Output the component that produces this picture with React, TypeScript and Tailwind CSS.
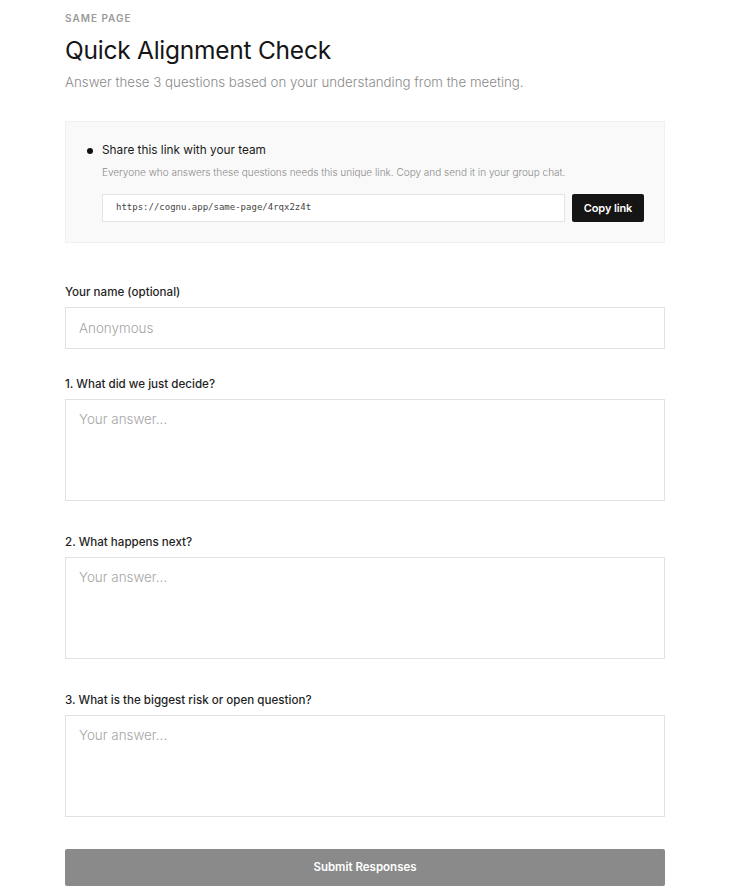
import React from 'react';

const questions = [
  '1. What did we just decide?',
  '2. What happens next?',
  '3. What is the biggest risk or open question?',
];

export default function App() {
  return (
    <div className="min-h-screen bg-white font-['Inter',sans-serif] text-[#1a1a1a]">
      <div className="w-[600px] ml-[65px] pt-[11px] pb-[4px]">
        <div className="text-[10px] leading-[15px] font-semibold tracking-[0.1em] uppercase text-[#9a9a9a]">
          Same Page
        </div>
        <h1 className="mt-[9px] text-[24.5px] leading-[30px] font-normal tracking-[-0.01em] text-[#151515]">
          Quick Alignment Check
        </h1>
        <p className="mt-[7px] text-[13.3px] leading-[20px] font-light text-[#8a8a8a]">
          Answer these 3 questions based on your understanding from the meeting.
        </p>

        <div className="mt-[29px] bg-[#f9f9f9] border border-[#f0f0f0] pl-[21px] pr-[20px] pt-[19px] pb-[20px]">
          <div className="flex items-center gap-[9px]">
            <span className="w-[6px] h-[6px] rounded-full bg-[#111] mt-[2px]" />
            <span className="text-[11.8px] leading-[18px] text-[#1a1a1a]">Share this link with your team</span>
          </div>
          <p className="ml-[15px] mt-[6px] text-[10px] leading-[14px] font-light text-[#8a8a8a]">
            Everyone who answers these questions needs this unique link. Copy and send it in your group chat.
          </p>
          <div className="ml-[15px] mt-[15px] flex gap-[7px]">
            <div className="flex-1 h-[28px] bg-white border border-[#e4e4e4] flex items-center px-[13px] font-['DejaVu_Sans_Mono',monospace] text-[9px] text-[#444]">
              https://cognu.app/same-page/4rqx2z4t
            </div>
            <button className="w-[72px] h-[28px] bg-[#151515] rounded-[2px] text-white text-[11px] font-semibold tracking-[-0.01em]">
              Copy link
            </button>
          </div>
        </div>

        <div className="mt-[39px]">
          <label className="block text-[11.6px] leading-[20px] font-medium text-[#1f1f1f] mb-[5px]">
            Your name (optional)
          </label>
          <input
            placeholder="Anonymous"
            className="block w-full h-[42px] border border-[#e2e2e2] px-[13px] text-[13.4px] font-light placeholder:text-[#a5a5a5] outline-none"
          />
        </div>

        {questions.map((q) => (
          <div key={q} className="mt-[25px] pb-[6px]">
            <label className="block text-[11.6px] leading-[20px] font-medium text-[#1f1f1f] mb-[5px]">{q}</label>
            <textarea
              placeholder="Your answer..."
              className="block w-full h-[102px] border border-[#e2e2e2] px-[13px] py-[9px] text-[13.4px] font-light placeholder:text-[#a5a5a5] outline-none resize-none"
            />
          </div>
        ))}

        <button className="mt-[26px] w-full h-[37px] bg-[#8a8a8a] rounded-[2px] text-white text-[11.5px] font-semibold">
          Submit Responses
        </button>
      </div>
    </div>
  );
}
